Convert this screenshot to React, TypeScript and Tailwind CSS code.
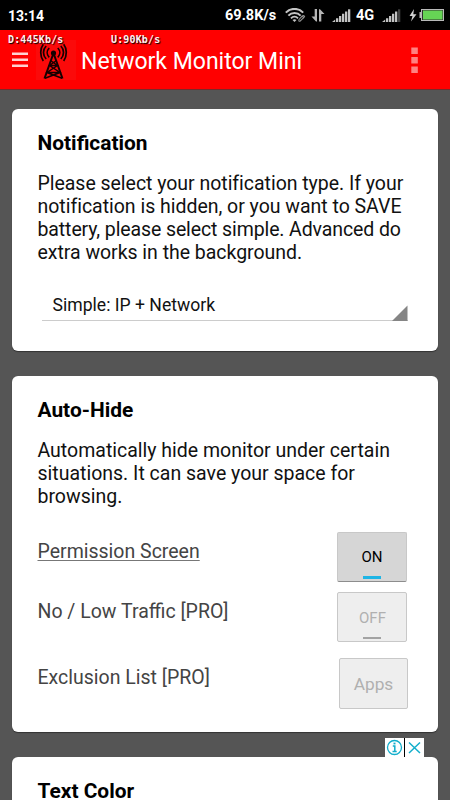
import type { ReactNode } from "react";

function WifiIcon() {
  return (
    <svg className="absolute left-[285px] top-[8px]" width="21" height="15" viewBox="0 0 21 15" fill="none">
      <path d="M.8 4.700C5.400-.4 13.600-.4 18.200 4.700" stroke="#c4c4c4" strokeWidth="2" />
      <path d="M3.400 7.600C6.700 4 12.300 4 15.600 7.600" stroke="#c4c4c4" strokeWidth="2" />
      <path d="M6 10.300C8 8.100 11 8.100 13 10.300" stroke="#c4c4c4" strokeWidth="1.900" />
      <path d="M7.500 11.900L9.500 14L11.500 11.900Q9.500 10.400 7.500 11.900Z" fill="#c4c4c4" />
      <path d="M14 11.500l2.500-2.700q2-1 1.800 1l-3 3.200q-2 .8-1.300-1.500zm2.600-3q2.400-2.200 3 .2l-2 2.300" stroke="#909090" strokeWidth="1.100" />
    </svg>
  );
}

function TrafficIcon() {
  return (
    <svg className="absolute left-[311px] top-[9px]" width="14" height="13" viewBox="0 0 14 13" fill="#b5b5b5">
      <path d="M3.700 0H6v12.500H5L.5 7.500h3.200zM8 .3h1l4.500 4.700h-3.200v7.500H8z" />
    </svg>
  );
}

function SignalIcon({ className, weak }: { className: string; weak?: boolean }) {
  return (
    <svg className={className} width="19" height="14" viewBox="0 0 19 14" fill="#c2c2c2">
      <path d="M0 13L3.200 10.500V13zM4 9.300h2.300V13H4zM7 7h2.300v6H7zM10 4.700h2.300V13H10zM13 2.500h2.300V13H13z" />
      <path d="M16 .3h2.300V13H16z" fill={weak ? "#424242" : "#c2c2c2"} />
    </svg>
  );
}

function StatusBar() {
  return (
    <div className="relative h-[30px] shrink-0 bg-black font-bold leading-[30px] text-white">
      <span className="absolute left-[8px] top-[1px] text-[14px]">13:14</span>
      <span className="absolute left-[225px] top-[1px] text-[14.500px]">69.8K/s</span>
      <WifiIcon />
      <TrafficIcon />
      <SignalIcon className="absolute left-[332px] top-[9px]" />
      <span className="absolute left-[356px] top-[1px] text-[14.500px]">4G</span>
      <SignalIcon className="absolute left-[382px] top-[9px]" weak />
      <svg className="absolute left-[409px] top-[9px]" width="8" height="13" viewBox="0 0 8 13" fill="#d0d0d0">
        <path d="M5 0L.5 7H3.500L2 12.500L7.500 5.300H4.300z" />
      </svg>
      <svg className="absolute left-[419px] top-[8px]" width="26" height="14" viewBox="0 0 26 14">
        <path d="M2 1h23v12H2v-3H.5V4H2z" fill="#b9b9b9" />
        <path d="M3 2h21v10H3z" fill="#303030" />
        <path d="M4 2.500h19.500v9H4z" fill="#66d455" />
      </svg>
    </div>
  );
}

function TowerIcon() {
  return (
    <svg className="ml-[8px] h-10 w-10 bg-[#fb0a0a]" viewBox="0 0 40 40" fill="none" stroke="#160000">
      <circle cx="17.500" cy="13" r="2.600" fill="#160000" stroke="none" />
      <path strokeWidth="1.700" d="M13.200 17.300C10.500 14.500 10.700 10.700 13.200 8M21.800 17.300C24.500 14.500 24.300 10.700 21.800 8" />
      <path strokeWidth="1.700" d="M10.200 19C6.600 15.500 6.600 9.500 10.200 6M24.800 19C28.400 15.500 28.400 9.500 24.800 6" />
      <path strokeWidth="1.700" d="M7.300 21C3.700 16 4 8.500 7.300 4.200M27.700 21C31.300 16 31 8.500 27.700 4.200" />
      <path strokeWidth="2" d="M17.200 14L8.500 38.500M17.800 14L26.500 38.500" />
      <path strokeWidth="1.500" d="M15.200 21L21.500 25.500L11 32.500L26 38.300M19.800 21L13.500 25.500L24 32.500L9 38.300M13.500 25.500H21.500M11 32.500H24" />
    </svg>
  );
}

function AppBar() {
  return (
    <div className="relative flex h-[60px] shrink-0 items-center border-b border-[#7a2a2a] bg-[#ff0000]">
      <svg className="ml-[12px]" width="16" height="16" viewBox="0 0 16 16" fill="#ffd0d0">
        <path d="M0 .6h16V3H0zM0 6.600h16V9H0zM0 12.600h16V15H0z" />
      </svg>
      <TowerIcon />
      <h1 className="ml-[5px] mt-[5px] whitespace-nowrap text-[23px] leading-[28px] text-white">Network Monitor Mini</h1>
      <svg className="ml-auto mr-[32px] mt-px" width="7" height="27" viewBox="0 0 7 27" fill="#ff8282">
        <path d="M.3 .5h6.500V7H.3zM.3 10h6.500v6.500H.3zM.3 19.500h6.500V26H.3z" />
      </svg>
      <div className="absolute left-[8px] top-[3px] font-['DejaVu_Sans_Mono',monospace] text-[10px] font-bold leading-[14px] tracking-[0.150px] text-[#fff0f0] [text-shadow:1px_1px_1px_#000]">
        D:445Kb/s
      </div>
      <div className="absolute left-[111px] top-[3px] font-['DejaVu_Sans_Mono',monospace] text-[10px] font-bold leading-[14px] tracking-[0.150px] text-[#fff0f0] [text-shadow:1px_1px_1px_#000]">
        U:90Kb/s
      </div>
    </div>
  );
}

function Card({ title, className, children }: { title: string; className: string; children?: ReactNode }) {
  return (
    <section className={`shrink-0 rounded-[6px] bg-white pl-[25.500px] pt-[22px] shadow-[0_1px_1px_#333] ${className}`}>
      <h2 className="text-[20.900px] font-bold leading-[24px] text-black">{title}</h2>
      {children}
    </section>
  );
}

function Row({ label, underline, className, children }: { label: string; underline?: boolean; className?: string; children: ReactNode }) {
  return (
    <div className={`flex justify-between ${className ?? ""}`}>
      <div className="pt-[8px] text-[19.500px] leading-[23px] text-[#444]">
        <span className={underline ? "underline decoration-[#777] decoration-1 underline-offset-2" : ""}>{label}</span>
      </div>
      {children}
    </div>
  );
}

export default function App() {
  return (
    <div className="flex h-[800px] w-[450px] flex-col overflow-hidden bg-[#555] font-[Roboto,sans-serif]">
      <StatusBar />
      <AppBar />
      <main className="flex flex-col px-[12px] pt-[19px]">
        <Card title="Notification" className="mb-[25px] h-[242px]">
          <p className="mt-[17px] whitespace-nowrap text-[19.500px] leading-[23px] text-[#111]">
            <span className="tracking-[-0.030px]">Please select your notification type. If your</span><br />
            <span className="tracking-[-0.020px]">notification is hidden, or you want to SAVE</span><br />
            <span className="tracking-[-0.110px]">battery, please select simple. Advanced do</span><br />
            <span className="tracking-[-0.030px]">extra works in the background.</span>
          </p>
          <div className="relative ml-[4px] mt-[28px] h-[29px] w-[366px] border-b border-[#ccc] pl-[11px] text-[17.600px] leading-[26px] text-[#111]">
            Simple: IP + Network
            <svg className="absolute -bottom-px right-0" width="16" height="16" viewBox="0 0 16 16" fill="#858585">
              <path d="M15.500 .5V16H0z" />
            </svg>
          </div>
        </Card>

        <Card title="Auto-Hide" className="relative mb-[25px] h-[356px]">
          <p className="mt-[17px] whitespace-nowrap text-[19.500px] leading-[23px] text-[#111]">
            Automatically hide monitor under certain<br />
            situations. It can save your space for<br />
            browsing.
          </p>
          <Row label="Permission Screen" underline className="mt-[24px]">
            <button className="relative mr-[31px] h-[50px] w-[70px] rounded-[2px] border border-[#c8c8c8] border-b-[#8d8d8d] bg-[#d6d6d6] pt-px text-[15px] text-black">
              ON
              <span className="absolute bottom-[2px] left-[25px] h-[3px] w-[18px] bg-[#1eb5e5]" />
            </button>
          </Row>
          <Row label="No / Low Traffic [PRO]" className="mt-[10px]">
            <button className="relative mr-[31px] h-[50px] w-[70px] rounded-[2px] border border-[#c8c8c8] bg-[#eee] pl-px pt-[2px] text-[15px] text-[#b0b0b0]">
              OFF
              <span className="absolute bottom-[2px] left-[25px] h-[2px] w-[18px] bg-[#a3a3a3]" />
            </button>
          </Row>
          <Row label="Exclusion List [PRO]" className="mt-[16px]">
            <button className="mr-[30px] h-[51px] w-[69px] rounded-[2px] border border-[#c8c8c8] bg-[#eee] pt-[2px] text-[17.300px] text-[#b0b0b0]">
              Apps
            </button>
          </Row>
          {/* ad choices badge, sits on the gap under the card */}
          <div className="absolute -bottom-[25px] right-[14px] flex h-[19px] gap-px bg-black">
            <div className="w-[19px] bg-white">
              <svg width="19" height="19" viewBox="0 0 19 19" fill="none" stroke="#12aecb">
                <circle cx="9.500" cy="9.500" r="7" strokeWidth="1.300" />
                <path d="M7.800 8H9.800V13.500M7.500 13.500H11.700" strokeWidth="1.500" />
                <path d="M8.500 5.500H10.500" strokeWidth="1.800" />
              </svg>
            </div>
            <div className="w-[19px] bg-white">
              <svg width="19" height="19" viewBox="0 0 19 19" stroke="#12aecb" strokeWidth="1.500">
                <path d="M4 4.500L15 15M15 4.500L4 15" />
              </svg>
            </div>
          </div>
        </Card>

        <Card title="Text Color" className="h-[120px]" />
      </main>
    </div>
  );
}
